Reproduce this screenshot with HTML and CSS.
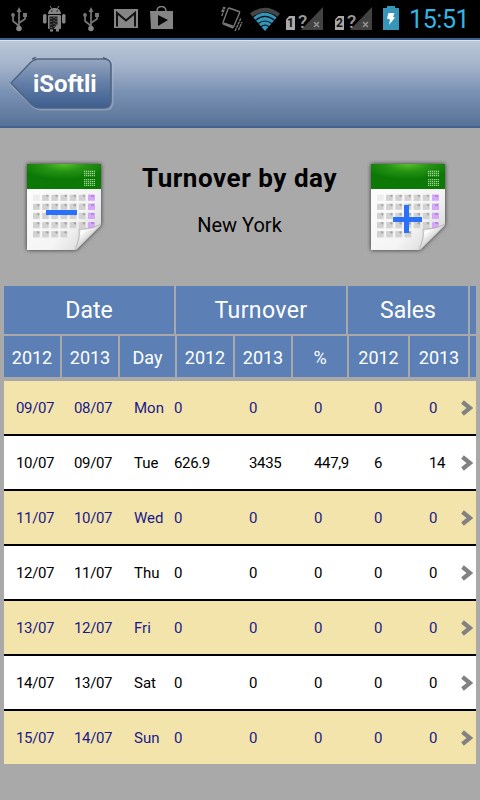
FILE: index.html
```html
<!DOCTYPE html>
<html lang="en">
<head>
<meta charset="utf-8">
<title>Turnover by day</title>
<link rel="stylesheet" href="styles.css">
</head>
<body>
<svg class="defs" aria-hidden="true">
  <defs>
    <linearGradient id="paper" x1="0" y1="0" x2="1" y2="1"><stop offset="0" stop-color="#fff"/><stop offset=".65" stop-color="#f4f4f4"/><stop offset="1" stop-color="#ccc"/></linearGradient>
    <radialGradient id="green" cx=".5" cy="0" r=".62"><stop offset="0" stop-color="#55c02c"/><stop offset=".5" stop-color="#249212"/><stop offset="1" stop-color="#0c7806"/></radialGradient>
    <linearGradient id="fold" x1="0" y1="0" x2=".6" y2=".7"><stop offset="0" stop-color="#999"/><stop offset=".4" stop-color="#fff"/><stop offset="1" stop-color="#bbb"/></linearGradient>
    <linearGradient id="back" x1="0" y1="0" x2="0" y2="1"><stop offset="0" stop-color="#95a6bf"/><stop offset=".5" stop-color="#627da6"/><stop offset="1" stop-color="#3d5e90"/></linearGradient>
    <pattern id="days" x="6" y="30.500" width="9.150" height="9.150" patternUnits="userSpaceOnUse"><rect width="6.800" height="6.300" fill="#d2d2d2"/><path d="M4 1h2.500M5 2h1" stroke="#777" stroke-width=".8"/></pattern>
    <pattern id="dots" x="57" y="5" width="2" height="2" patternUnits="userSpaceOnUse"><rect width="1.300" height="1.300" fill="#9ad08a"/></pattern>
    <symbol id="calendar" viewBox="-4 -4 84 96">
      <path class="paper-shadow" d="M0 0h74v61L49 86H0z"/>
      <path d="M0 0h74v61L49 86H0z" fill="url(#paper)"/>
      <path d="M0 0h74v25H0z" fill="url(#green)"/>
      <path d="M57 6h11v7H57zM57 15h11v7H57z" fill="url(#dots)"/>
      <path d="M15 30.500h46v36H15zM6 39.600h10v27H6zM6 66h35v8H6z" fill="url(#days)"/>
      <path d="M6 30.500h6.800v6.300H6z" fill="#eee"/>
      <path d="M61 30.500h7v6.300h-7zM61 39.600h7v6.300h-7zM61 48.800h7v6.300h-7zM61 58h7v4l-2 2h-5z" fill="#d4a9fa"/>
      <path d="M64 32h3M64 41h3M64 50h3M64 59h3" stroke="#8b6ca8" stroke-width=".9"/>
      <path d="M74 61c-6 3-13 5-21 5 1 7-1 14-4 20z" fill="url(#fold)"/>
      <path d="M74 60c-7 4-14 5-22 5 1 7-1 13-4 21" fill="none" stroke="#aaa" stroke-width=".8"/>
    </symbol>
    <symbol id="usb" viewBox="0 0 18 26">
      <path d="M9 22V4M9 19l-6-5V9M9 16l6-4V8" fill="none" stroke="#777" stroke-width="1.700"/>
      <path d="M6.500 5L9 0l2.500 5z" fill="#777"/><circle cx="9" cy="21.500" r="2.800" fill="#858585"/><circle cx="3" cy="8" r="1.900" fill="#777"/><path d="M13 6h4v4h-4z" fill="#777"/>
    </symbol>
  </defs>
</svg>

<header class="status">
  <svg class="ico usb1"><use href="#usb"/></svg>
  <svg class="ico robot" viewBox="0 0 24 26">
    <g fill="#858585"><path d="M5 8c0-8 13-8 13 0z"/><rect x="5" y="9" width="13" height="14" rx="1"/><rect x="0" y="8" width="3.500" height="9.500" rx="1.500"/><rect x="19" y="8" width="3.500" height="9.500" rx="1.500"/><path d="M7 22h3v3.500H7zM13 22h3v3.500h-3z"/></g>
    <path d="M7 0l2 3M16 0l-2 3" stroke="#858585"/><path d="M6.500 10.500h8v8c-2 1-3 4-4 5h-4z" fill="#202020"/><path d="M8 12v10M11 11v10M13 12v7" stroke="#777" stroke-dasharray="1 2"/><path d="M8 5h1.500M13.500 5H15" stroke="#111"/>
  </svg>
  <svg class="ico usb2"><use href="#usb"/></svg>
  <svg class="ico mail" viewBox="0 0 24 19"><path d="M0 0h24v19H0z" fill="#858585"/><path d="M3 17.500V4L12 11.500 21 4v13.500" fill="none" stroke="#111" stroke-width="2"/></svg>
  <svg class="ico play" viewBox="0 0 23 23"><path d="M7 5c0-6 9-6 9 0" fill="none" stroke="#858585" stroke-width="1.500"/><path d="M0 5h23v18H1z" fill="#858585"/><path d="M8 9l10 5-10 6z" fill="#080808"/></svg>
  <svg class="ico vibrate" viewBox="0 0 22 26"><g fill="none" stroke="#777" stroke-width="1.400"><path d="M8 2l10 3.500q1 .5.500 1.500l-6 14q-.5 1-1.500.5L2.500 18q-1-.5-.5-1.500l5-13.500q.3-1 1-1z"/><path d="M.8 10L4 1M.8 6L2.800 1M14 25l6-13M17.500 24l3.500-8" stroke-dasharray="3 .6"/><path d="M3 17.500l9 3" stroke-width="2"/></g></svg>
  <svg class="ico wifi" viewBox="0 0 30 24"><path d="M0 6.500Q15-5 30 6.500l-2.500 3.300Q15 .5 2.500 9.800z" fill="#454545"/><path d="M3.300 10.500Q15 1 26.700 10.500L15 24z" fill="#3596ba"/><path d="M5.500 13.200q9.500-7.500 19 0M8.300 16.500q6.700-5 13.400 0M11 19.700q4-3 8 0" fill="none" stroke="#07151a" stroke-width="1.200"/></svg>
  <div class="sim sim1"><span class="card">1</span><svg class="signal" viewBox="0 0 22 23"><path d="M22 0v23H0z" fill="#424242"/><path d="M13 15l5 5M18 15l-5 5" stroke="#999" stroke-width="1.300"/></svg><span class="unknown">?</span></div>
  <div class="sim sim2"><span class="card">2</span><svg class="signal" viewBox="0 0 22 23"><path d="M22 0v23H0z" fill="#424242"/><path d="M13 15l5 5M18 15l-5 5" stroke="#999" stroke-width="1.300"/></svg><span class="unknown">?</span></div>
  <svg class="ico battery" viewBox="0 0 16 24"><path d="M0 2h4V0h8v2h4v22H0z" fill="#3596ba"/><path d="M5.500 7h6l-1.500 4 2 .5-6 7.500 1-5.500-3-1z" fill="#fff"/></svg>
  <span class="clock">15:51</span>
</header>

<nav class="bar">
  <a class="back">
    <svg class="back-shape" viewBox="0 0 104 56"><path d="M1 28L20 7Q24 3 29 3h66q7 0 7 7v37q0 6-7 6H31q-5 0-9-4z" fill="none" stroke="#b9c4d466" stroke-width="3"/><path d="M1 27L20 7Q24 3 29 3h65q7 0 7 7v35q0 7-7 7H30q-5 0-9-4z" fill="url(#back)" stroke="#50647f" stroke-width="1.600"/><path d="M22 3l4-1.500M93 1.500l4 2" stroke="#50647f" stroke-width="1.500"/></svg>
    <span class="back-label">iSoftli</span>
  </a>
</nav>

<section class="heading">
  <svg class="cal" viewBox="0 0 84 96"><use href="#calendar" width="84" height="96"/><path d="M23 50h31v5H23z" fill="#2b70fb"/></svg>
  <div class="titles"><h1>Turnover by day</h1><p>New York</p></div>
  <svg class="cal" viewBox="0 0 84 96"><use href="#calendar" width="84" height="96"/><path d="M37 45h5v12h13v5H42v11h-5V62H26v-5h11z" fill="#2b70fb"/></svg>
</section>

<main class="table">
  <div class="groups"><div>Date</div><div class="wide">Turnover</div><div>Sales</div><div></div></div>
  <div class="columns"><div>2012</div><div>2013</div><div>Day</div><div>2012</div><div>2013</div><div>%</div><div>2012</div><div>2013</div><div></div></div>
  <div class="rows">
    <div class="row"><span>09/07</span><span>08/07</span><span class="day">Mon</span><span>0</span><span>0</span><span>0</span><span>0</span><span>0</span><svg class="chev" viewBox="0 0 12 16"><path d="M1.500 2L9 8l-7.500 6" /></svg></div>
    <div class="row"><span>10/07</span><span>09/07</span><span class="day">Tue</span><span>626.9</span><span>3435</span><span>447,9</span><span>6</span><span>14</span><svg class="chev" viewBox="0 0 12 16"><path d="M1.500 2L9 8l-7.500 6" /></svg></div>
    <div class="row"><span>11/07</span><span>10/07</span><span class="day">Wed</span><span>0</span><span>0</span><span>0</span><span>0</span><span>0</span><svg class="chev" viewBox="0 0 12 16"><path d="M1.500 2L9 8l-7.500 6" /></svg></div>
    <div class="row"><span>12/07</span><span>11/07</span><span class="day">Thu</span><span>0</span><span>0</span><span>0</span><span>0</span><span>0</span><svg class="chev" viewBox="0 0 12 16"><path d="M1.500 2L9 8l-7.500 6" /></svg></div>
    <div class="row"><span>13/07</span><span>12/07</span><span class="day">Fri</span><span>0</span><span>0</span><span>0</span><span>0</span><span>0</span><svg class="chev" viewBox="0 0 12 16"><path d="M1.500 2L9 8l-7.500 6" /></svg></div>
    <div class="row"><span>14/07</span><span>13/07</span><span class="day">Sat</span><span>0</span><span>0</span><span>0</span><span>0</span><span>0</span><svg class="chev" viewBox="0 0 12 16"><path d="M1.500 2L9 8l-7.500 6" /></svg></div>
    <div class="row"><span>15/07</span><span>14/07</span><span class="day">Sun</span><span>0</span><span>0</span><span>0</span><span>0</span><span>0</span><svg class="chev" viewBox="0 0 12 16"><path d="M1.500 2L9 8l-7.500 6" /></svg></div>
  </div>
</main>
</body>
</html>
```
FILE: styles.css
```css
* { box-sizing: border-box; }
body { margin: 0; width: 480px; height: 800px; overflow: hidden; background: #a9a9a9; font-family: Roboto, sans-serif; color: #000; }
.defs { position: absolute; width: 0; height: 0; }

.status { height: 38px; background: #000; display: flex; align-items: flex-start; }
.ico { flex: none; display: block; }
.usb1 { width: 18px; height: 26px; margin: 7px 0 0 10px; }
.robot { width: 24px; height: 26px; margin: 6px 0 0 15px; }
.usb2 { width: 18px; height: 26px; margin: 7px 0 0 15px; }
.mail { width: 24px; height: 19px; margin: 9px 0 0 14px; }
.play { width: 23px; height: 23px; margin: 6px 0 0 12px; }
.vibrate { width: 22px; height: 26px; margin: 6px 0 0 48px; }
.wifi { width: 30px; height: 24px; margin: 7px 0 0 7px; }
.sim { flex: none; width: 37px; height: 24px; display: grid; grid-template-columns: 9px 3px 3px 9px 13px; align-items: end; }
.sim1 { margin: 6px 0 0 6px; }
.sim2 { margin: 6px 0 0 12px; }
.card { grid-area: 1 / 1; height: 14px; background: #aaa; color: #111; font: bold 12px/14px Roboto, sans-serif; text-align: center; clip-path: polygon(35% 0, 100% 0, 100% 100%, 0 100%, 0 25%); }
.signal { grid-area: 1 / 3 / 2 / 6; width: 22px; height: 23px; justify-self: end; }
.unknown { grid-area: 1 / 3 / 2 / 5; margin-left: -3px; font: 500 19px/17px Roboto, sans-serif; color: #999; text-align: center; }
.battery { width: 16px; height: 24px; margin: 6px 0 0 11px; }
.clock { margin: 5px 0 0 10px; font-size: 25px; line-height: 30px; color: #33b5e5; letter-spacing: -.4px; }

.bar { height: 90px; background: linear-gradient(#bac8d9, #a4b3ca 30%, #7890b3 62%, #587297); border-top: 2px solid #3d5f8f; border-bottom: 2px solid #43628f; box-shadow: inset 0 1px #dde4ec; padding: 16px 0 0 10px; }
.back { display: grid; width: 104px; height: 56px; }
.back-shape, .back-label { grid-area: 1 / 1; }
.back-shape { width: 104px; height: 56px; }
.back-label { padding: 14px 0 0 23px; font-weight: 700; font-size: 24px; line-height: 28px; color: #fff; letter-spacing: -.1px; }

.heading { height: 158px; padding: 32px 29px 0 23px; display: flex; }
.cal { width: 84px; height: 96px; flex: none; }
.paper-shadow { fill: #444; filter: drop-shadow(0 0 2px #333); }
.titles { flex: 1; text-align: center; padding-left: 5px; }
h1 { margin: 3px 0 0 0; font-size: 26px; line-height: 30px; font-weight: 700; white-space: nowrap; letter-spacing: .55px; }
p { margin: 20px 0 0; font-size: 20px; line-height: 24px; }

.table { margin: 0 4px; }
.groups, .columns { display: grid; grid-template-rows: 100%; color: #fff; text-align: center; gap: 2px; }
.groups > div, .columns > div { background: #5c7fb6; }
.groups { grid-template-columns: 170px 170px 120px 6px; height: 48px; font-size: 23px; line-height: 50px; }
.groups .wide { letter-spacing: .4px; }
.columns { grid-template-columns: 56px 56px 55px 56px 56px 54px 59px 58px 6px; height: 41px; margin-top: 2px; font-size: 18px; line-height: 44px; }
.rows { margin-top: 4px; display: grid; gap: 2px; background: #000; }
.row { height: 53px; background: #fff; display: grid; grid-template-columns: 58px 60px 40px 75px 65px 60px 55px 32px 15px; padding-left: 12px; align-items: center; font-size: 15px; line-height: 20px; letter-spacing: -.35px; overflow: hidden; }
.row:nth-child(odd) { background: #f3e4ac; color: #1a1a8a; }
.row > span { white-space: nowrap; }
.row > .day { letter-spacing: 0; }
.chev { width: 12px; height: 16px; fill: none; stroke: #828282; stroke-width: 4.2; }
```
